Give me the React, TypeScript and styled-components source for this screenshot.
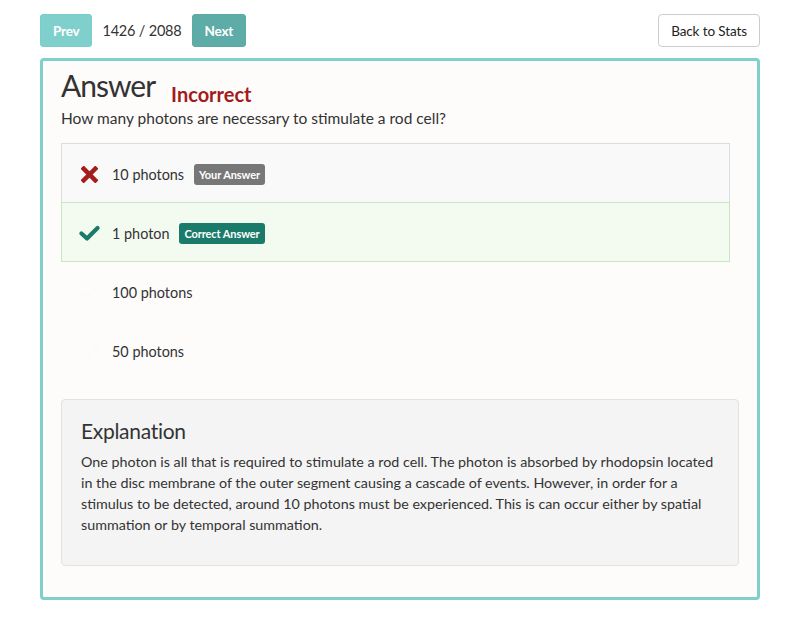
import React from "react";
import styled, { createGlobalStyle } from "styled-components";

const Global = createGlobalStyle`
  html, body { margin: 0; padding: 0; background: #ffffff; }
  body { font-family: Lato, "Open Sans", sans-serif; color: #333333; }
  * { box-sizing: border-box; }
`;

const Page = styled.div`
  padding: 14px 40px 0 40px;
  width: 800px;
`;

const TopBar = styled.div`
  display: flex;
  align-items: center;
  height: 33px;
`;

const NavGroup = styled.div`
  display: flex;
  align-items: center;
  gap: 10px;
  flex: 1;
`;

const NavButton = styled.button<{ $dim?: boolean }>`
  height: 33px;
  padding: 0 12px;
  border: 1px solid ${(p) => (p.$dim ? "#79cdc9" : "#5aaaa6")};
  border-radius: 3px;
  background: ${(p) => (p.$dim ? "#7fd0cc" : "#5eaca8")};
  color: #ffffff;
  font-family: Lato, sans-serif;
  font-weight: 700;
  font-size: 13.5px;
  letter-spacing: -0.2px;
`;

const Counter = styled.span`
  font-size: 14.5px;
  letter-spacing: -0.2px;
  color: #333;
`;

const BackButton = styled.button`
  height: 33px;
  padding: 0 12px;
  background: #fff;
  border: 1px solid #cccccc;
  border-radius: 4px;
  font-family: Lato, sans-serif;
  font-size: 13.5px;
  letter-spacing: -0.1px;
  color: #222;
`;

const Panel = styled.div`
  margin-top: 11px;
  border: 3px solid #7fcfcc;
  border-radius: 4px;
  background: #fdfcfb;
  padding: 6px 18px 30px 18px;
  height: 542px;
`;

const TitleRow = styled.div`
  display: flex;
  align-items: baseline;
`;

const Title = styled.h2`
  margin: 0;
  font-size: 30px;
  font-weight: 400;
  letter-spacing: -1px;
  line-height: 1.2;
  color: #333;
`;

const Verdict = styled.span`
  margin-left: 16px;
  font-size: 20px;
  font-weight: 700;
  color: #a31b1b;
  position: relative;
  top: 5px;
`;

const Question = styled.p`
  margin: 6px 0 0 0;
  font-size: 15.5px;
  line-height: 1.2;
  color: #333;
`;

const Options = styled.div`
  margin: 15px 9px 0 0;
  display: flex;
  flex-direction: column;
`;

type Kind = "wrong" | "right" | "plain";

const OptionRow = styled.div<{ $kind: Kind }>`
  display: flex;
  align-items: center;
  height: 60px;
  margin-top: -1px;
  padding: 3px 0 0 16px;
  border: 1px solid
    ${(p) =>
      p.$kind === "wrong" ? "#dddddd" : p.$kind === "right" ? "#c8e6c2" : "transparent"};
  background: ${(p) =>
    p.$kind === "wrong" ? "#f9f9f9" : p.$kind === "right" ? "#f3fbf1" : "transparent"};
  position: relative;
  z-index: ${(p) => (p.$kind === "right" ? 1 : 0)};
  &:first-child { margin-top: 0; }
`;

const IconBox = styled.span`
  width: 22px;
  height: 20px;
  display: flex;
  align-items: center;
  justify-content: center;
  margin-right: 12px;
`;

const OptionText = styled.span`
  font-size: 14.4px;
  color: #333;
`;

const Badge = styled.span<{ $tone: "grey" | "green" }>`
  margin-left: 10px;
  padding: 4px 5px 4px;
  border-radius: 3px;
  font-size: 11px;
  font-weight: 700;
  letter-spacing: -0.1px;
  color: #fff;
  background: ${(p) => (p.$tone === "grey" ? "#777777" : "#1a7b6b")};
`;

const Explanation = styled.div`
  margin-top: 19px;
  background: #f4f4f4;
  border: 1px solid #e2e2e2;
  border-radius: 4px;
  padding: 18px 19px 30px 19px;
`;

const ExpTitle = styled.h3`
  margin: 0 0 8px 0;
  font-size: 21px;
  font-weight: 400;
  letter-spacing: -0.3px;
  line-height: 1.2;
  color: #333;
`;

const ExpText = styled.p`
  margin: 0;
  font-size: 14.3px;
  line-height: 21px;
  color: #333;
`;

const Cross = () => (
  <svg width="17" height="17" viewBox="0 0 16 16">
    <path
      d="M2.5 2.5 L13.5 13.5 M13.5 2.5 L2.5 13.5"
      stroke="#a41c1c"
      strokeWidth="4.2"
      strokeLinecap="square"
      fill="none"
    />
  </svg>
);

const Check = ({ color }: { color: string }) => (
  <svg width="21" height="16" viewBox="0 0 21 16">
    <path
      d="M2.5 8.5 L8 13.5 L18.5 3"
      stroke={color}
      strokeWidth="4.2"
      strokeLinecap="round"
      strokeLinejoin="round"
      fill="none"
    />
  </svg>
);

const options: { text: string; kind: Kind; badge?: string }[] = [
  { text: "10 photons", kind: "wrong", badge: "Your Answer" },
  { text: "1 photon", kind: "right", badge: "Correct Answer" },
  { text: "100 photons", kind: "plain" },
  { text: "50 photons", kind: "plain" },
];

export default function App() {
  return (
    <>
      <Global />
      <Page>
        <TopBar>
          <NavGroup>
            <NavButton $dim>Prev</NavButton>
            <Counter>1426 / 2088</Counter>
            <NavButton>Next</NavButton>
          </NavGroup>
          <BackButton>Back to Stats</BackButton>
        </TopBar>
        <Panel>
          <TitleRow>
            <Title>Answer</Title>
            <Verdict>Incorrect</Verdict>
          </TitleRow>
          <Question>How many photons are necessary to stimulate a rod cell?</Question>
          <Options>
            {options.map((o) => (
              <OptionRow key={o.text} $kind={o.kind}>
                <IconBox>
                  {o.kind === "wrong" ? (
                    <Cross />
                  ) : (
                    <Check color={o.kind === "right" ? "#1a7b6b" : "#fcfbfa"} />
                  )}
                </IconBox>
                <OptionText>{o.text}</OptionText>
                {o.badge && (
                  <Badge $tone={o.kind === "wrong" ? "grey" : "green"}>{o.badge}</Badge>
                )}
              </OptionRow>
            ))}
          </Options>
          <Explanation>
            <ExpTitle>Explanation</ExpTitle>
            <ExpText>
              One photon is all that is required to stimulate a rod cell. The photon is absorbed by
              rhodopsin located in the disc membrane of the outer segment causing a cascade of events.
              However, in order for a stimulus to be detected, around 10 photons must be experienced.
              This is can occur either by spatial summation or by temporal summation.
            </ExpText>
          </Explanation>
        </Panel>
      </Page>
    </>
  );
}
